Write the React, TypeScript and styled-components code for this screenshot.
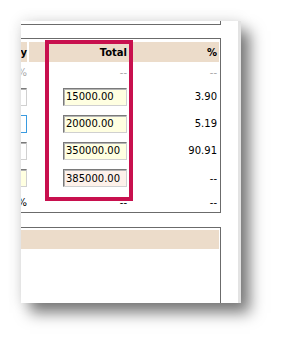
import React from 'react'
import styled, { createGlobalStyle } from 'styled-components'

const GlobalStyle = createGlobalStyle`
  html, body {
    margin: 0;
    padding: 0;
    background: #ffffff;
  }
  body {
    font-family: "DejaVu Sans", Verdana, sans-serif;
    font-size: 10px;
    color: #000;
  }
`

type Cell =
  | { kind: 'text'; value: string; muted?: boolean }
  | { kind: 'input'; value: string; tone?: 'plain' | 'focus' | 'yellow' | 'pink' }

interface Row {
  height: number
  qty: Cell
  total: Cell
  pct: Cell
}

const rows: Row[] = [
  { height: 21, qty: { kind: 'text', value: '%', muted: true }, total: { kind: 'text', value: '--', muted: true }, pct: { kind: 'text', value: '--', muted: true } },
  { height: 27, qty: { kind: 'input', value: '3', tone: 'plain' }, total: { kind: 'input', value: '15000.00', tone: 'yellow' }, pct: { kind: 'text', value: '3.90' } },
  { height: 27, qty: { kind: 'input', value: '4', tone: 'focus' }, total: { kind: 'input', value: '20000.00', tone: 'yellow' }, pct: { kind: 'text', value: '5.19' } },
  { height: 27, qty: { kind: 'input', value: '1', tone: 'plain' }, total: { kind: 'input', value: '350000.00', tone: 'yellow' }, pct: { kind: 'text', value: '90.91' } },
  { height: 28, qty: { kind: 'input', value: '', tone: 'yellow' }, total: { kind: 'input', value: '385000.00', tone: 'pink' }, pct: { kind: 'text', value: '--' } },
  { height: 20, qty: { kind: 'text', value: '%' }, total: { kind: 'text', value: '--' }, pct: { kind: 'text', value: '--' } },
]

function renderCell(cell: Cell, width: number) {
  if (cell.kind === 'text') {
    return <Value $muted={cell.muted}>{cell.value}</Value>
  }
  return <Field readOnly value={cell.value} $tone={cell.tone || 'plain'} style={{ width }} />
}

export default function App() {
  return (
    <Stage>
      <GlobalStyle />
      <Paper>
        <Sheet>
          <TopBox />
          <TableBox>
            <Grid>
              <HeadCell>Qty</HeadCell>
              <HeadCell $pad={3}>Total</HeadCell>
              <HeadCell $pad={2}>%</HeadCell>
              {rows.map((row, i) => (
                <React.Fragment key={i}>
                  <BodyCell $h={row.height} $pad={0}>{renderCell(row.qty, 48)}</BodyCell>
                  <BodyCell $h={row.height} $pad={3}>{renderCell(row.total, 64)}</BodyCell>
                  <BodyCell $h={row.height} $pad={2}>{renderCell(row.pct, 60)}</BodyCell>
                </React.Fragment>
              ))}
            </Grid>
          </TableBox>
          <LowerBox>
            <TanBar />
          </LowerBox>
        </Sheet>
        <Highlight />
      </Paper>
    </Stage>
  )
}

const Stage = styled.div`
  width: 282px;
  height: 345px;
  padding: 21px 0 0 21px;
  box-sizing: border-box;
  overflow: hidden;
`

const Paper = styled.div`
  position: relative;
  width: 220px;
  height: 282px;
  box-sizing: border-box;
  background: #ffffff;
  border-right: 3px solid #e3e3e3;
  overflow: hidden;
  box-shadow: 9px 10px 14px rgba(0, 0, 0, 0.5), 0 0 14px rgba(0, 0, 0, 0.12);
`

const Sheet = styled.div`
  width: 260px;
  margin-left: -60px;
  display: flex;
  flex-direction: column;
`

const TopBox = styled.div`
  height: 3px;
  border-right: 1px solid #6b6b6b;
  border-bottom: 1px solid #6b6b6b;
`

const TableBox = styled.div`
  margin-top: 13px;
  border: 1px solid #6b6b6b;
  padding: 3px 1px 0 1px;
`

const Grid = styled.div`
  display: grid;
  grid-template-columns: 64px 101px 87px;
  column-gap: 2px;
`

const HeadCell = styled.div<{ $pad?: number }>`
  height: 20px;
  background: #ecdcca;
  font-weight: bold;
  font-size: 10px;
  display: flex;
  align-items: center;
  justify-content: flex-end;
  padding-right: ${p => p.$pad ?? 0}px;
`

const BodyCell = styled.div<{ $h: number; $pad: number }>`
  height: ${p => p.$h}px;
  display: flex;
  align-items: center;
  justify-content: flex-end;
  padding-right: ${p => p.$pad}px;
`

const Value = styled.span<{ $muted?: boolean }>`
  color: ${p => (p.$muted ? '#a8a8a8' : '#000000')};
  font-size: 10px;
  white-space: nowrap;
`

const toneBg = {
  plain: '#ffffff',
  focus: '#ffffff',
  yellow: '#ffffe1',
  pink: '#fdf1ea',
}

const Field = styled.input<{ $tone: 'plain' | 'focus' | 'yellow' | 'pink' }>`
  height: 18px;
  box-sizing: border-box;
  margin: 0;
  padding: 0 0 0 2px;
  font-family: "DejaVu Sans", Verdana, sans-serif;
  font-size: 10px;
  color: #000;
  background: ${p => toneBg[p.$tone]};
  outline: none;
  border: 1px solid;
  border-color: ${p =>
    p.$tone === 'focus'
      ? '#3a9be0'
      : '#7a7a7a #d0d0d0 #d0d0d0 #7a7a7a'};
  box-shadow: ${p => (p.$tone === 'focus' ? 'none' : 'inset 1px 1px 0 #b4b4b4')};
`

const LowerBox = styled.div`
  margin-top: 14px;
  height: 120px;
  border-top: 1px solid #6b6b6b;
  border-right: 1px solid #6b6b6b;
  padding: 2px 1px 0 1px;
`

const TanBar = styled.div`
  height: 19px;
  background: #ecdcca;
`

const Highlight = styled.div`
  position: absolute;
  left: 24px;
  top: 19px;
  width: 88px;
  height: 161px;
  box-sizing: border-box;
  border: 4px solid #c8104e;
  pointer-events: none;
`
